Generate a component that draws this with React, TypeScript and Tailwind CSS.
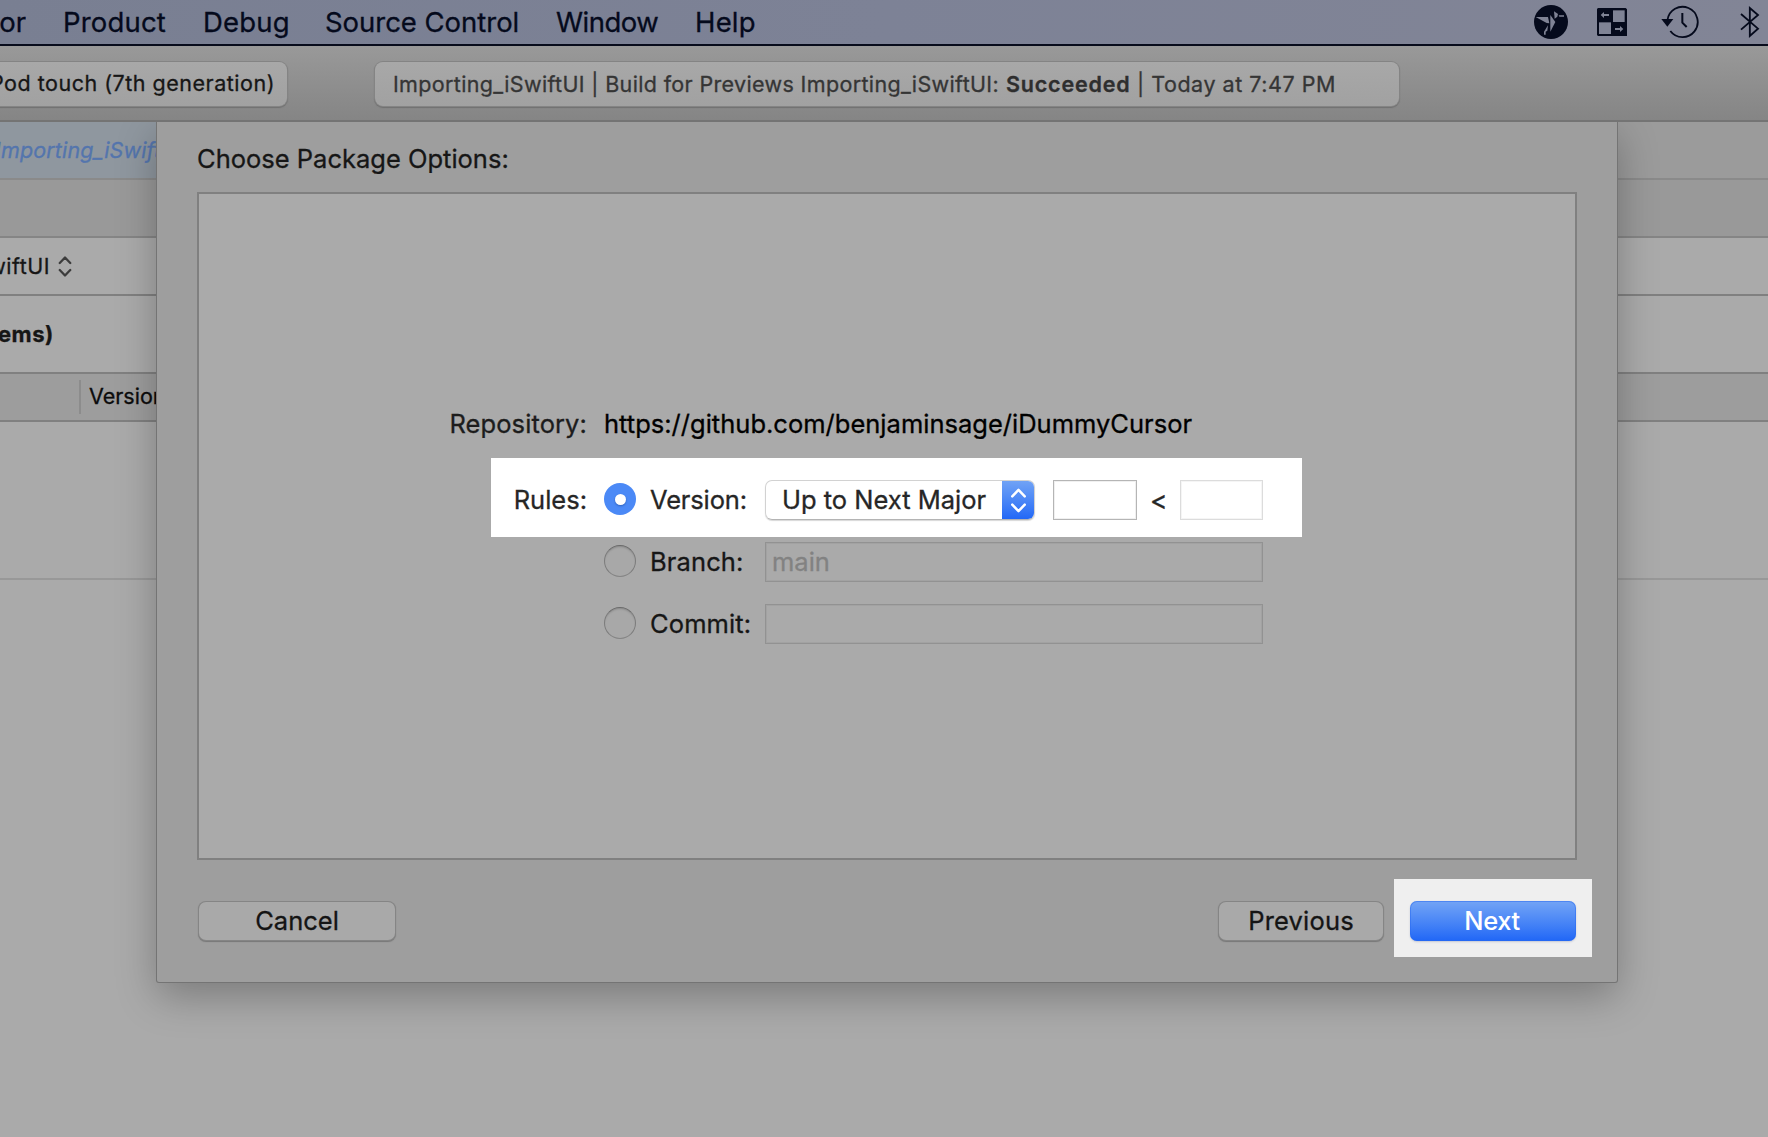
import React from "react";

function SwiftBirdIcon() {
  return (
    <svg className="h-[34px] w-[34px] shrink-0" viewBox="162 15 102 102">
      <circle cx="213" cy="66" r="51" fill="#050a1c" />
      <g fill="#7f8395">
        <path d="M167 51 L204 51 L208 70 L200 69 Z" />
        <path d="M211 45 L226 66 L211 95 Z" />
        <path d="M222 34 L234 42 L232 50 L224 56 Z" />
        <path d="M236 46 H252 V50 H238 Z" />
        <path d="M204 76 L202 92 L197 95 V104 H192 V95 Z" />
      </g>
    </svg>
  );
}

function SwapTilesIcon() {
  return (
    <svg className="h-[28px] w-[30px] shrink-0" viewBox="351 24 90 84">
      <path d="M354 24 H437 L441 28 V108 H354 L351 105 V27 Z" fill="#050a1c" />
      <g fill="#7f8395">
        <path d="M399 31 H434 V66 H399 Z" />
        <path d="M357 67 H393 V102 H357 Z" />
        <path d="M362 45 L372 36 V42 H387 V48 H372 V54 Z" />
        <path d="M430 87 L420 78 V84 H405 V90 H420 V96 Z" />
      </g>
    </svg>
  );
}

function TimeMachineIcon() {
  return (
    <svg className="h-[34px] w-[38px] shrink-0" viewBox="542 15 114 102" fill="none" stroke="#050a1c" strokeWidth="5.500">
      <path d="M561.5 60 A45.5 45.5 0 1 1 570 93" />
      <path d="M606 39 V68 L619 81" strokeWidth="6" />
      <path d="M543 57 H579 L561 80 Z" fill="#050a1c" stroke="none" />
    </svg>
  );
}

function BluetoothIcon() {
  return (
    <svg className="h-[34px] w-[20px] shrink-0" viewBox="780 18 60 102" fill="none" stroke="#050a1c" strokeWidth="5.500">
      <path d="M783 45 L834 89 L809.500 111 V27 L834 48 L783 92" />
    </svg>
  );
}

function Chevrons({ className, width }: { className: string; width: number }) {
  return (
    <svg className={className} viewBox="0 0 16 24" fill="none" stroke="currentColor" strokeWidth={width} strokeLinecap="round" strokeLinejoin="round">
      <path d="M2 8 L8 1.800 L14 8" />
      <path d="M2 16 L8 22.200 L14 16" />
    </svg>
  );
}

function MenuBar() {
  return (
    <div className="flex h-[46px] shrink-0 items-center border-b-2 border-[#080c1c] bg-linear-to-r from-[#797f92] via-[#7d8296] to-[#828596] text-[27.5px] leading-[44px] text-[#050a1c]">
      <div className="flex w-[26px] justify-end overflow-hidden">or</div>
      <div className="ml-[37px] w-[140px] tracking-[0.17px]">Product</div>
      <div className="w-[122px] tracking-[0.2px]">Debug</div>
      <div className="w-[231px] tracking-[-0.03px]">Source Control</div>
      <div className="w-[139px] tracking-[-0.5px]">Window</div>
      <div className="tracking-[0.2px]">Help</div>
      <div className="ml-auto flex w-[234px] items-center">
        <SwiftBirdIcon />
        <div className="ml-[29px] flex"><SwapTilesIcon /></div>
        <div className="ml-[34px] flex"><TimeMachineIcon /></div>
        <div className="ml-[41px] flex"><BluetoothIcon /></div>
      </div>
    </div>
  );
}

function Toolbar() {
  return (
    <div className="flex h-[76px] shrink-0 border-b-2 border-[#747474] bg-linear-to-b from-[#999999] to-[#858585] pt-4 text-[21.5px] whitespace-nowrap">
      <div className="flex h-[44px] w-[287px] justify-end overflow-hidden rounded-r-[8px] bg-linear-to-b from-[#a8a8a8] to-[#a1a1a1] pr-[12px] leading-[43px] tracking-[0.51px] text-[#161616] shadow-[0_0_0_1px_#848484,0_1px_1px_1px_#707070]">
        Pod touch (7th generation)
      </div>
      <div className="ml-[88px] flex h-[44px] w-[1024px] rounded-[8px] bg-linear-to-b from-[#a8a8a8] to-[#a1a1a1] pl-[18px] leading-[44px] text-[#353535] shadow-[0_0_0_1px_#848484,0_1px_1px_1px_#707070]">
        <span className="w-[613px] tracking-[0.35px]">Importing_iSwiftUI | Build for Previews Importing_iSwiftUI:</span>
        <span className="w-[131px] font-semibold tracking-[0.8px] text-[#2e2e2e]">Succeeded</span>
        <span className="tracking-[0.53px]">| Today at 7:47 PM</span>
      </div>
    </div>
  );
}

function Field({ className, children }: { className: string; children?: React.ReactNode }) {
  return <div className={"h-[40px] shrink-0 border " + className}>{children}</div>;
}

function EmptyRadio() {
  return (
    <div className="-mt-[2px] h-[32px] w-[32px] shrink-0 rounded-full border border-[#7c7c7c] border-t-[#6a6a6a] border-b-[#858585] bg-[#a8a8a8] shadow-[inset_0_2px_2px_-1px_#888]" />
  );
}

function OptionRow({ label, value, className }: { label: string; value?: string; className: string }) {
  return (
    <div className={"flex items-center pl-[405px] leading-[40px] text-[#161616] " + className}>
      <EmptyRadio />
      <span className="ml-[14px] w-[115px] tracking-[0.12px]">{label}</span>
      <Field className="w-[498px] border-[#929292] pl-[6px] leading-[38px] text-[#828282] shadow-[inset_0_0_0_1px_#a2a2a2]">{value}</Field>
    </div>
  );
}

function PackageForm() {
  return (
    <div className="mt-[17px] ml-[40px] flex h-[668px] w-[1380px] flex-col border-2 border-[#808080] bg-[#aaaaaa] pt-[214px]">
      <div className="flex h-[32px] leading-[32px] whitespace-nowrap">
        <span className="w-[388px] text-right tracking-[0.1px] text-[#1c1c1c]">Repository:</span>
        <span className="ml-[17px] tracking-[0.01px] text-black">https://github.com/benjaminsage/iDummyCursor</span>
      </div>
      <div className="mt-[18px] ml-[292px] flex h-[79px] w-[811px] bg-white pt-[22px] leading-[40px] text-[#262626]">
        <span className="w-[96px] text-right">Rules:</span>
        <div className="mt-[3px] ml-[17px] flex h-[32px] w-[32px] shrink-0 items-center justify-center rounded-full bg-[#4b89f6]">
          <div className="h-[11px] w-[11px] rounded-full bg-white shadow-[0_1px_2px_#2f62bd]" />
        </div>
        <span className="ml-[14px] w-[115px] tracking-[-0.15px]">Version:</span>
        <div className="flex h-[40px] w-[270px] shrink-0 overflow-hidden rounded-[7px] border border-[#d2d2d2] border-b-[#b4b4b4] shadow-[0_1px_1px_#d8d8d8]">
          <span className="-mt-px w-[236px] pl-[16px] whitespace-nowrap">Up to Next Major</span>
          <div className="-mt-px -mr-px flex h-[40px] w-[33px] shrink-0 items-center justify-center bg-linear-to-b from-[#73a4f5] to-[#2066f6] text-white">
            <Chevrons className="h-[25px] w-[17px]" width={2.4} />
          </div>
        </div>
        <Field className="ml-[18px] w-[84px] border-[#b5b5b5] shadow-[inset_0_0_0_1px_#f0f0f0]" />
        <span className="w-[43px] pl-[13px] text-[26.5px]">{"<"}</span>
        <Field className="w-[83px] border-[#dcdcdc] shadow-[inset_0_0_0_1px_#f5f5f5]" />
      </div>
      <OptionRow label="Branch:" value="main" className="mt-[5px]" />
      <OptionRow label="Commit:" className="mt-[22px]" />
    </div>
  );
}

function PushButton({ className, children }: { className: string; children: React.ReactNode }) {
  return (
    <div className={"h-[38px] rounded-[7px] bg-[#a9a9a9] text-center leading-[38px] text-[#141414] shadow-[0_0_0_1px_#858585,0_1px_1px_1px_#777] " + className}>
      {children}
    </div>
  );
}

function PackageSheet() {
  return (
    <div className="absolute top-0 left-[157px] h-[860px] w-[1460px] rounded-b-[2px] bg-[#9e9e9e] pt-[18px] text-[25.5px] shadow-[0_0_0_1px_#747474,0_14px_40px_rgba(0,0,0,0.28)]">
      <div className="h-[35px] pl-[40px] leading-[37px] text-[#161616]">Choose Package Options:</div>
      <PackageForm />
      <div className="flex items-start pl-[42px]">
        <PushButton className="mt-[42px] w-[196px]">Cancel</PushButton>
        <PushButton className="mt-[42px] ml-[824px] w-[164px] tracking-[0.17px]">Previous</PushButton>
        <div className="mt-[19px] ml-[11px] flex h-[78px] w-[198px] bg-[#efefef] pt-[22px] pl-4">
          <div className="h-[40px] w-[166px] rounded-[7px] bg-linear-to-b from-[#73a4f5] to-[#2066f6] pr-[2px] text-center leading-[39px] font-medium tracking-[-0.4px] text-white shadow-[inset_0_0_0_1px_rgba(40,105,240,0.5),0_1px_2px_#c4c8d4] [-webkit-text-stroke:0px]">
            Next
          </div>
        </div>
      </div>
    </div>
  );
}

export default function App() {
  return (
    <div className="flex h-[1137px] w-[1768px] flex-col overflow-hidden bg-[#aaaaaa] font-['Inter',sans-serif] [-webkit-text-stroke:0.3px]">
      <MenuBar />
      <Toolbar />
      <div className="relative flex-1 overflow-hidden text-[21.5px] whitespace-nowrap text-[#161616]">
        <div className="flex h-[58px] border-b-2 border-[#8a8a8a] bg-[#9b9b9b]">
          <div className="w-[400px] bg-[#8f979f] leading-[56px] tracking-[0.14px] text-[#5475ad] italic">
            <div className="-ml-[5px]">Importing_iSwift</div>
          </div>
        </div>
        <div className="h-[58px] border-b-2 border-[#858585] bg-[#999999]" />
        <div className="flex h-[58px] items-center border-b-2 border-[#808080]">
          <div className="flex w-[50px] shrink-0 justify-end overflow-hidden tracking-[0.5px]">wiftUI</div>
          <Chevrons className="ml-[8px] h-[21px] w-[14px] text-[#3c3c3c]" width={2.6} />
        </div>
        <div className="flex h-[78px] border-b-2 border-[#808080]">
          <div className="-ml-[2px] text-[22px] leading-[76px] font-bold tracking-[0.5px]">ems)</div>
        </div>
        <div className="flex h-[48px] items-center border-b-2 border-[#808080] bg-[#9d9d9d] text-[#0c0c0c]">
          <div className="ml-[79px] h-[34px] w-[2px] bg-[#8c8c8c]" />
          <div className="-mt-[2px] pl-[8px]">Version</div>
        </div>
        <div className="h-[158px] border-b-2 border-[#989898]" />
        <PackageSheet />
      </div>
    </div>
  );
}
